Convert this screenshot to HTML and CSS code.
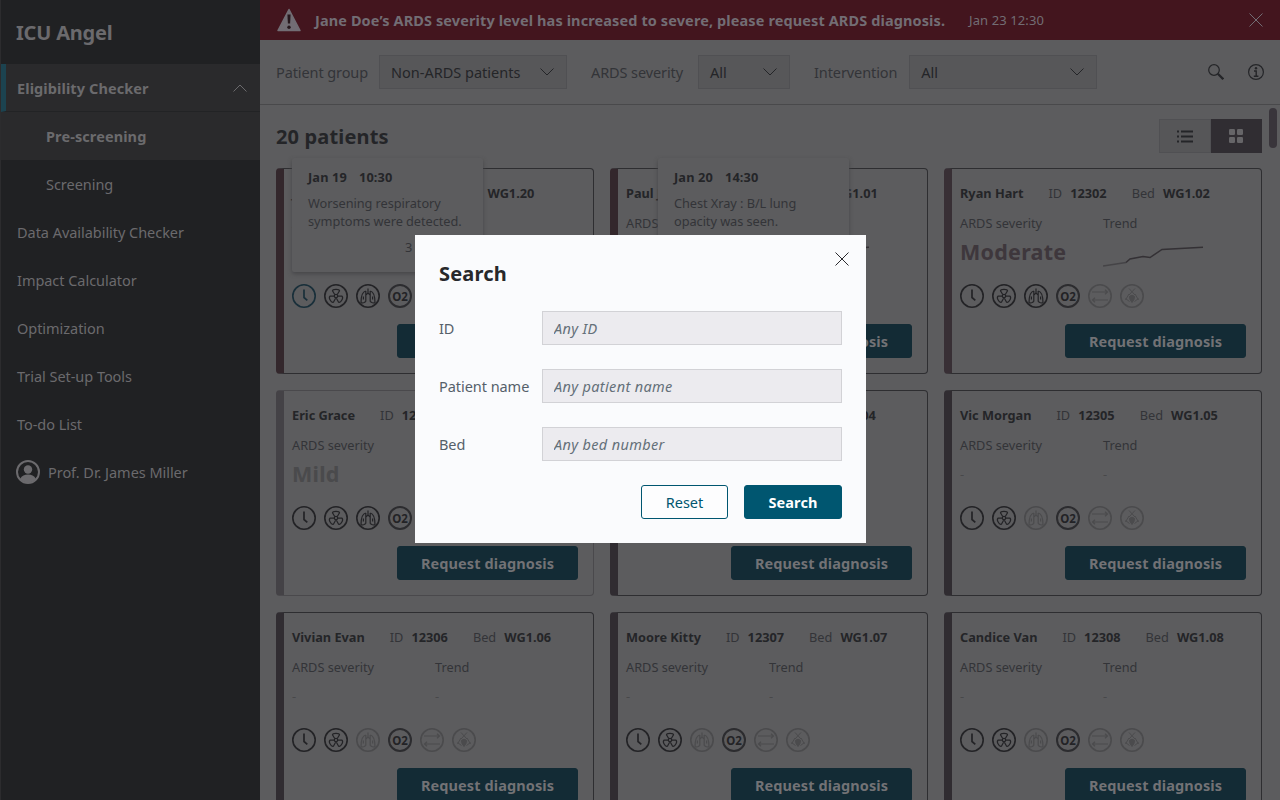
FILE: index.html
```html
<!DOCTYPE html>
<html lang="en">
<head>
<meta charset="UTF-8">
<title>ICU Angel</title>
<link rel="stylesheet" href="styles.css">
</head>
<body>
<svg class="sprite">
  <symbol id="i-clock" viewBox="0 0 24 24"><circle cx="12" cy="12" r="11.2"/><path d="M12 5.5v8l3.3 2.8" stroke-width="1.7"/></symbol>
  <symbol id="i-xray" viewBox="0 0 24 24"><circle cx="12" cy="12" r="11.2"/><g stroke-width="1.2"><circle cx="12" cy="12" r="1.7"/><path d="M10.700 10.500 8.500 6.800c0-2 7-2 7 0l-2.200 3.700M10.200 12.200H6c-1.800 1.500 1 6.800 3.400 6l2.200-4M13.800 12.200H18c1.800 1.500-1 6.800-3.400 6l-2.200-4"/></g></symbol>
  <symbol id="i-lungs" viewBox="0 0 24 24"><circle cx="12" cy="12" r="11.2"/><g stroke-width="1.2"><path d="M12 4.500v4.500l-2.200 2.200M12 9l2.200 2.200M9.800 7C7 7.500 5 11 5 19c1.500 0 4-.5 4.800-1.800V7M14.200 7c2.800.5 4.800 4 4.800 12-1.500 0-4-.5-4.800-1.800V7M7.400 12.500v3M16.600 12.500v3"/></g></symbol>
  <symbol id="i-vent" viewBox="0 0 24 24"><circle cx="12" cy="12" r="11.2"/><path d="M4 8h15.500M17 5.700l2.500 2.300-2.500 2.300M20 16H4.500M7 13.700 4.500 16 7 18.300" stroke-width="1.2"/></symbol>
  <symbol id="i-prone" viewBox="0 0 24 24"><circle cx="12" cy="12" r="11.2"/><g stroke-width="1"><path d="m9 4.500 6 6.500M15 4.500 9 11M9 10l-3.500 6M15 10l3.500 6M5.500 14.500l4 3M18.500 14.500l-4 3"/><path d="M9.500 12.500c1-1.500 4-1.500 5 0l-.5 3-2 3-2-3z" fill="currentColor"/></g></symbol>
  <symbol id="i-chevron" viewBox="0 0 14 8"><path d="m.5.5 6.500 6.500L13.500.5"/></symbol>
  <symbol id="i-close" viewBox="0 0 14 14"><path d="m.5.5 13 13M13.500.5l-13 13"/></symbol>
</svg>

<div class="app">
  <nav class="sidebar">
    <h1 class="brand">ICU Angel</h1>
    <a class="nav-item open">Eligibility Checker<svg class="chevron up"><use href="#i-chevron"/></svg></a>
    <a class="nav-item sub current">Pre-screening</a>
    <a class="nav-item sub">Screening</a>
    <a class="nav-item">Data Availability Checker</a>
    <a class="nav-item">Impact Calculator</a>
    <a class="nav-item">Optimization</a>
    <a class="nav-item">Trial Set-up Tools</a>
    <a class="nav-item">To-do List</a>
    <a class="nav-item user">
      <svg viewBox="0 0 24 24" class="avatar"><circle cx="12" cy="12" r="11" fill="none" stroke="currentColor" stroke-width="2"/><circle cx="12" cy="9.500" r="4.200" fill="currentColor"/><path d="M4 19c2-3.500 4.500-4.500 8-4.500s6 1 8 4.500a11 11 0 0 1-16 0z" fill="currentColor"/></svg>
      Prof. Dr. James Miller
    </a>
  </nav>

  <main class="main">
    <div class="alert">
      <svg viewBox="0 0 24 24" class="warn"><path d="M12 1.500 23 22.500H1z" fill="currentColor" stroke="currentColor" stroke-width="1.500" stroke-linejoin="round"/><path d="M10.400 6.500h3.200l-.5 9h-2.200z" fill="#26181d"/><circle cx="12" cy="19.200" r="1.700" fill="#26181d"/></svg>
      <strong>Jane Doe’s ARDS severity level has increased to severe, please request ARDS diagnosis.</strong>
      <span class="alert-time">Jan 23 12:30</span>
      <svg class="close"><use href="#i-close"/></svg>
    </div>

    <div class="filters">
      <label>Patient group</label>
      <div class="select group">Non-ARDS patients<svg class="chevron"><use href="#i-chevron"/></svg></div>
      <label>ARDS severity</label>
      <div class="select severity">All<svg class="chevron"><use href="#i-chevron"/></svg></div>
      <label>Intervention</label>
      <div class="select intervention">All<svg class="chevron"><use href="#i-chevron"/></svg></div>
      <div class="tools">
        <svg width="16" height="16" viewBox="0 0 16 16"><circle cx="6" cy="6" r="5.300" fill="none" stroke="currentColor" stroke-width="1.200"/><path d="m9.800 9.800 5.500 5.400" stroke="currentColor" stroke-width="2.300"/></svg>
        <svg width="16" height="16" viewBox="0 0 16 16"><circle cx="8" cy="8" r="7.400" fill="none" stroke="currentColor" stroke-width="1.200"/><circle cx="8" cy="4.200" r="1.200" fill="currentColor"/><path d="M6 7h2.200v5M5.800 12.200h4.600" fill="none" stroke="currentColor" stroke-width="1.400"/></svg>
      </div>
    </div>

    <div class="content">
      <div class="content-head">
        <h2>20 patients</h2>
        <div class="view-toggle">
          <span class="view"><svg width="16" height="13" viewBox="0 0 16 13"><path d="M0 1.500h2M4 1.500h12M0 6.500h2M4 6.500h12M0 11.500h2M4 11.500h12" stroke="currentColor" stroke-width="2"/></svg></span>
          <span class="view on"><svg width="14" height="14" viewBox="0 0 14 14" fill="currentColor"><rect width="6" height="6" rx="1.200"/><rect x="8" width="6" height="6" rx="1.200"/><rect y="8" width="6" height="6" rx="1.200"/><rect x="8" y="8" width="6" height="6" rx="1.200"/></svg></span>
        </div>
      </div>
      <div class="cards" id="cards"></div>
    </div>
    <div class="scroll-thumb"></div>
  </main>
</div>

<div class="modal">
  <svg class="close"><use href="#i-close"/></svg>
  <h2>Search</h2>
  <div class="fields">
    <label for="fId">ID</label><input id="fId" placeholder="Any ID">
    <label for="fName">Patient name</label><input id="fName" placeholder="Any patient name">
    <label for="fBed">Bed</label><input id="fBed" placeholder="Any bed number">
  </div>
  <div class="actions">
    <button class="btn reset">Reset</button>
    <button class="btn primary">Search</button>
  </div>
</div>

<script>
const patients=[
  {name:'Jane Doe',id:'12320',bed:'WG1.20',level:'severe',label:'Severe',lungs:true,active:true,
   note:{date:'Jan 19',time:'10:30',text:'Worsening respiratory symptoms were detected.',more:'3 events'}},
  {name:'Paul Jones',id:'12301',bed:'WG1.01',level:'severe',label:'Severe',lungs:true,trend:true,
   note:{date:'Jan 20',time:'14:30',text:'Chest Xray : B/L lung opacity was seen.',more:'',shift:true}},
  {name:'Ryan Hart',id:'12302',bed:'WG1.02',level:'moderate',label:'Moderate',lungs:true,trend:true},
  {name:'Eric Grace',id:'12303',bed:'WG1.03',level:'mild',label:'Mild',lungs:true},
  {name:'Mary Cole',id:'12304',bed:'WG1.04'},
  {name:'Vic Morgan',id:'12305',bed:'WG1.05'},
  {name:'Vivian Evan',id:'12306',bed:'WG1.06'},
  {name:'Moore Kitty',id:'12307',bed:'WG1.07'},
  {name:'Candice Van',id:'12308',bed:'WG1.08'}
];

function icon(name,cls){return '<svg class="icon '+(cls||'')+'"><use href="#i-'+name+'"/></svg>';}

function noteHtml(n){
  if(!n)return '';
  return '<div class="note'+(n.shift?' shift':'')+'"><b>'+n.date+'</b><b>'+n.time+'</b><p>'+n.text+'</p><div class="more">'+n.more+'</div></div>';
}

function card(p){
  const trend=p.trend
    ?'<svg class="trend" viewBox="0 0 101 24"><path class="faint" d="M0 21 23 17.500"/><path d="m23 17.500 4-3.500 13-2.500 7 1 12-8 41-2.200"/></svg>'
    :'<span class="none">-</span>';
  return '<article class="card '+(p.level||'unknown')+'">'+
    '<div class="who"><b class="name">'+p.name+'</b><span>ID</span><b class="num">'+p.id+'</b><span>Bed</span><b>'+p.bed+'</b></div>'+
    '<div class="stats"><div>ARDS severity'+(p.label?'<strong class="level">'+p.label+'</strong>':'<span class="none">-</span>')+'</div>'+
    '<div>Trend'+trend+'</div></div>'+
    '<div class="icons">'+icon('clock',p.active?'active':'')+icon('xray')+icon('lungs',p.lungs?'':'off')+
    '<span class="o2">O2</span>'+icon('vent','off')+icon('prone','off')+'</div>'+
    '<button class="btn request">Request diagnosis</button>'+noteHtml(p.note)+'</article>';
}

document.getElementById('cards').innerHTML=patients.map(card).join('');
</script>
</body>
</html>
```
FILE: styles.css
```css
:root{
  --page:#5c5c5e;
  --ink:#242528;
  --ink-soft:#333438;
  --teal:#132b35;
  --side:#202123;
}
*{box-sizing:border-box;}
body{margin:0;height:800px;overflow:hidden;position:relative;background:var(--page);color:var(--ink);font-family:"Noto Sans","Open Sans",sans-serif;font-size:14.5px;}
svg{flex:none;}
h1,h2,p{margin:0;}
.sprite{position:absolute;width:0;height:0;}
.app{display:flex;height:800px;}

.sidebar{width:260px;flex:none;background:var(--side);color:#6b6a6d;border-left:1px solid #2c2c2e;}
.brand{height:64px;padding:18px 0 0 15px;font-size:20px;line-height:30px;letter-spacing:-.2px;}
.nav-item{display:flex;align-items:center;height:48px;padding:0 13px 0 16px;letter-spacing:-.04px;}
.sub{padding-left:45px;}
.open,.current{background:#2a2a2c;font-weight:700;letter-spacing:.1px;}
.open{border-left:5px solid #1c4350;padding-left:11px;border-bottom:1px solid #222325;}
.nav-item .chevron{margin-left:auto;}
.user{padding-left:15px;gap:8px;}
.avatar{width:24px;height:24px;}
.chevron{width:14px;height:8px;fill:none;stroke:currentColor;}
.chevron.up{transform:rotate(180deg);}
.close{width:14px;height:14px;fill:none;stroke:currentColor;}

.main{flex:1;min-width:0;position:relative;}
.alert{display:flex;align-items:center;height:40px;padding:0 17px 0 17px;background:#43151e;color:#726d74;}
.warn{width:24px;height:24px;margin-right:14px;}
.alert strong{white-space:nowrap;letter-spacing:.11px;}
.alert-time{margin-left:24px;font-size:13px;letter-spacing:.1px;}
.alert .close{margin-left:auto;}
.filters{display:flex;align-items:center;height:65px;padding:0 16px;border-bottom:1px solid #49494b;color:var(--ink-soft);letter-spacing:-.1px;}
.select{display:flex;align-items:center;justify-content:space-between;height:34px;padding:0 12px 0 11px;background:#575759;border:1px solid #505053;color:var(--ink);letter-spacing:0;}
.group{width:188px;margin:0 24px 0 11px;}
.severity{width:92px;margin:0 24px 0 15px;}
.intervention{width:188px;margin-left:12px;}
.tools{display:flex;gap:24px;margin-left:auto;color:var(--ink);}

.content{padding:14px 18px 0 16px;}
.content-head{display:flex;justify-content:space-between;align-items:center;height:34px;margin-bottom:15px;}
.content-head h2{font-size:20px;letter-spacing:.15px;}
.view-toggle{display:flex;}
.view{display:flex;align-items:center;justify-content:center;width:52px;height:34px;background:#565658;border:1px solid #505053;}
.view.on{width:51px;padding-right:1px;background:#302d32;border-color:#302d32;color:#666568;}
.scroll-thumb{position:absolute;right:3px;top:108px;width:8px;height:40px;border-radius:4px;background:#39353b;}

.cards{display:grid;grid-template-columns:repeat(3,318px);gap:16px;}
.card{position:relative;display:flex;flex-direction:column;height:206px;padding:13px 15px 15px 8px;border:1px solid #2e2e31;border-left:8px solid #302c31;border-radius:4px;font-size:12.75px;color:var(--ink-soft);}
.severe{border-left-color:#33272c;}
.moderate{border-left-color:#382f35;}
.mild{border-color:#4a494c;border-left-color:#444246;}
.who{display:flex;height:22px;line-height:22px;white-space:nowrap;}
.who b{color:var(--ink);margin-left:8px;}
.who .name{margin-left:0;}
.who .name,.who .num{margin-right:25px;}
.stats{display:grid;grid-template-columns:143px 1fr;height:80px;padding-top:9px;line-height:20px;}
.stats strong,.stats .none{display:block;}
.level{font-size:21.5px;line-height:38px;letter-spacing:.25px;color:#3e373c;}
.mild .level{color:#4a4a4c;}
.none{color:#48484a;line-height:38px;}
.trend{display:block;width:101px;height:24px;margin-top:12px;fill:none;stroke:#343135;stroke-width:1.5;}
.trend .faint{stroke:#454447;}
.icons{display:flex;gap:8px;}
.icon,.o2{width:24px;height:24px;color:#232326;}
.icon{fill:none;stroke:currentColor;stroke-width:1.6;}
.icon.active{color:#192f3a;}
.icon.off{color:#4b4b4d;}
.o2{display:flex;align-items:center;justify-content:center;border:2px solid #2c2c2f;border-radius:50%;font-size:11.5px;font-weight:700;}
.btn{height:34px;padding:0;border:1px solid var(--teal);border-radius:3px;font:inherit;}
.request{width:181px;margin:auto 0 0 auto;background:var(--teal);color:#727275;font-size:14.5px;font-weight:700;letter-spacing:.1px;}

/* event note shown over a card */
.note{position:absolute;left:8px;top:-11px;width:191px;height:114px;padding:10px 16px 0;background:var(--page);box-shadow:0 2px 4px #464649;border-radius:2px;line-height:18px;letter-spacing:-.05px;}
.note.shift{left:40px;}
.note b{color:var(--ink);margin-right:12px;letter-spacing:.15px;}
.note p{margin-top:8px;}
.more{margin-top:8px;padding-left:97px;white-space:nowrap;}

.modal{position:absolute;left:415px;top:235px;width:451px;height:308px;padding:24px;background:#fafbfd;color:#55606a;}
.modal .close{position:absolute;right:17px;top:17px;color:#2a2a2e;}
.modal h2{font-size:20px;line-height:29px;letter-spacing:.2px;color:#27282b;margin-bottom:23px;}
.fields{display:grid;grid-template-columns:103px 300px;row-gap:24px;align-items:center;letter-spacing:-.05px;}
.fields input{height:34px;padding:0 11px;border:1px solid #d2d2d6;border-radius:0;background:#ecebef;font:inherit;letter-spacing:.35px;}
.fields input::placeholder{color:#647079;font-style:italic;opacity:1;}
.actions{display:flex;justify-content:flex-end;gap:16px;margin-top:24px;}
.reset{width:87px;background:#fdfdfe;border-color:#005670;color:#005670;}
.primary{width:98px;background:#005670;border-color:#005670;color:#fff;font-weight:700;letter-spacing:.1px;}
```
